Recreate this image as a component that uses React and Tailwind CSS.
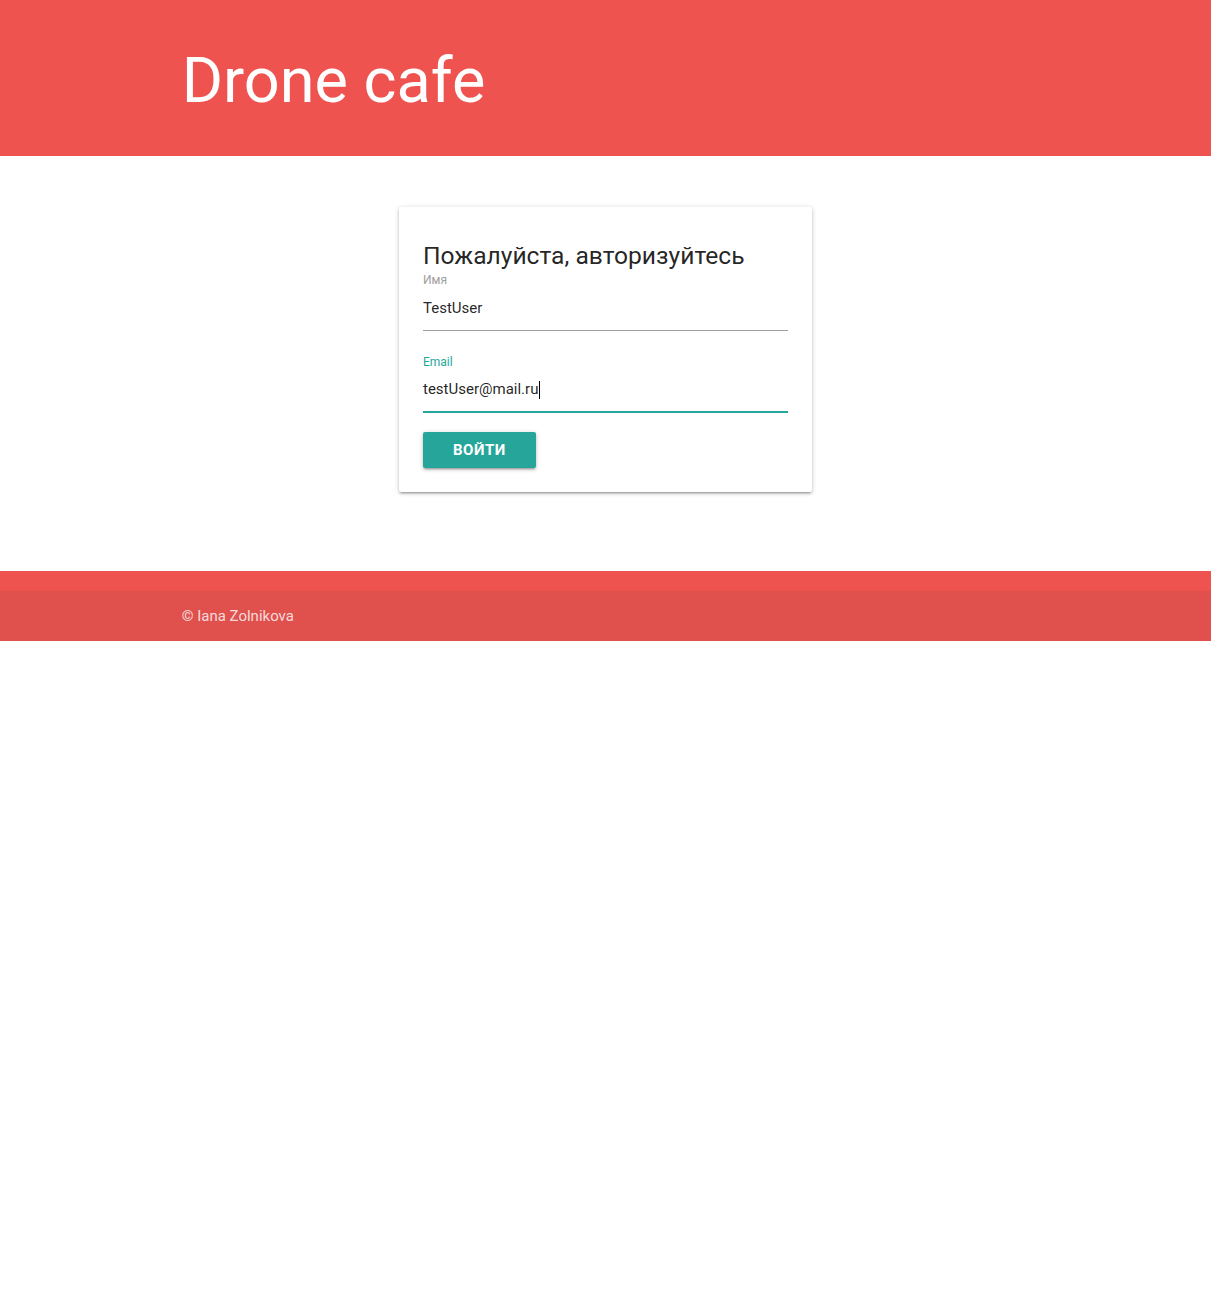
export default function App() {
  return (
    <div className="min-h-[1299px] bg-white" style={{ fontFamily: "Roboto, 'Noto Sans', sans-serif" }}>
      <header className="h-[156px] bg-[#ef5350]">
        <div className="mx-auto w-[70%] pt-[46px]">
          <h1 className="text-[63px] leading-[70px] font-normal text-white">Drone cafe</h1>
        </div>
      </header>

      <main className="h-[415px] pt-[51px]">
        <div className="mx-auto w-[413px] rounded-[2px] bg-white px-6 pt-6 pb-6 shadow-[0_2px_2px_0_rgba(0,0,0,0.14),0_3px_1px_-2px_rgba(0,0,0,0.12),0_1px_5px_0_rgba(0,0,0,0.2)]">
          <div className="mt-[9px] text-[24.6px] leading-[32px] text-[rgba(0,0,0,0.87)]">
            Пожалуйста, авторизуйтесь
          </div>

          <div className="text-[12px] leading-[16px] text-[#9e9e9e]">Имя</div>
          <div className="flex h-[43px] items-center border-b border-[#9e9e9e] pb-px text-[15px] text-[rgba(0,0,0,0.87)]">
            TestUser
          </div>

          <div className="mt-[23px] text-[12px] leading-[16px] text-[#26a69a]">Email</div>
          <div className="flex h-[42px] items-center border-b border-[#26a69a] pb-[2px] text-[15px] text-[rgba(0,0,0,0.87)] shadow-[0_1px_0_0_#26a69a]">
            <span>testUser@mail.ru</span>
            <span className="ml-px inline-block h-[18px] w-px bg-black"></span>
          </div>

          <button className="mt-[20px] h-[36px] rounded-[2px] bg-[#26a69a] px-[30px] text-[15px] font-bold uppercase tracking-[0.5px] text-white shadow-[0_2px_2px_0_rgba(0,0,0,0.14),0_3px_1px_-2px_rgba(0,0,0,0.12),0_1px_5px_0_rgba(0,0,0,0.2)]">
            Войти
          </button>
        </div>
      </main>

      <footer className="bg-[#ef5350] pt-[20px]">
        <div className="h-[50px] bg-[rgba(51,51,51,0.08)]">
          <div className="mx-auto w-[70%] text-[15px] leading-[50px] text-[rgba(255,255,255,0.8)]">
            © Iana Zolnikova
          </div>
        </div>
      </footer>
    </div>
  );
}
